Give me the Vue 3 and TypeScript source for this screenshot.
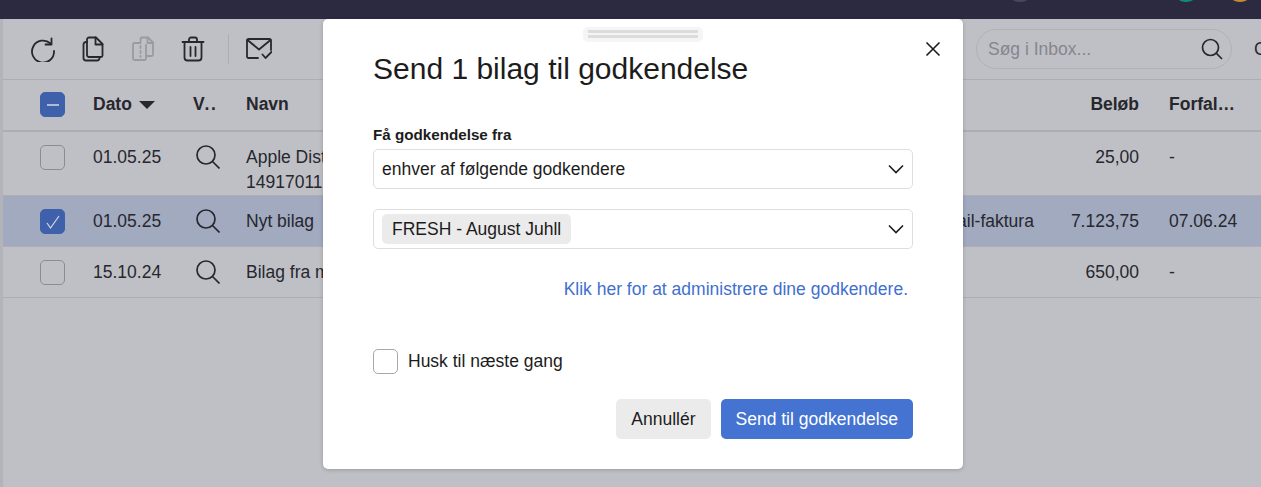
<script setup lang="ts">
type Row = {
  date: string;
  name: string[];
  kind: string;
  amount: string;
  due: string;
  selected: boolean;
};

const rows: Row[] = [
  { date: "01.05.25", name: ["Apple Distribution", "1491701199"], kind: "", amount: "25,00", due: "-", selected: false },
  { date: "01.05.25", name: ["Nyt bilag"], kind: "E-mail-faktura", amount: "7.123,75", due: "07.06.24", selected: true },
  { date: "15.10.24", name: ["Bilag fra mail"], kind: "", amount: "650,00", due: "-", selected: false },
];
</script>

<template>
  <div class="page">
    <header class="topbar">
      <span class="dot dot-grey"></span>
      <span class="dot dot-green"></span>
      <span class="dot dot-orange"></span>
    </header>

    <main class="panel">
      <div class="toolbar">
        <svg class="tool" width="24" height="26" viewBox="0 0 24 26" fill="none">
          <path d="M19.500 7.500A11 11 0 1 0 23 15" />
          <path d="M20.500 2.500v6h-6" />
        </svg>
        <svg class="tool" width="24" height="26" viewBox="0 0 24 26" fill="none">
          <path d="M8 1.500h7L21.500 8v11.500a1.500 1.500 0 0 1-1.500 1.500H8a2 2 0 0 1-2-2V3.500a2 2 0 0 1 2-2z" />
          <path d="M14.500 1.500V8.500h7" />
          <path d="M6 6H5A2.500 2.500 0 0 0 2.500 8.500V22A2.500 2.500 0 0 0 5 24.500h11A2.500 2.500 0 0 0 18.500 22v-1" />
        </svg>
        <svg class="tool tool-off" width="24" height="26" viewBox="0 0 24 26" fill="none">
          <path d="M11 1.500h6l5 5v12a1.500 1.500 0 0 1-1.500 1.500H15" />
          <path d="M16.500 1.500V7H22" />
          <path d="M9.500 7V3A1.500 1.500 0 0 1 11 1.500" />
          <path d="M9 7H3.500A1.500 1.500 0 0 0 2 8.500v14A1.500 1.500 0 0 0 3.500 24h10a1.500 1.500 0 0 0 1.500-1.500V9" />
          <path d="M9.500 10v2m0 3v2m0 3v1" />
        </svg>
        <svg class="tool" width="24" height="26" viewBox="0 0 24 26" fill="none">
          <path d="M1.500 6h21" />
          <path d="M8 6V3.500a2 2 0 0 1 2-2h4a2 2 0 0 1 2 2V6" />
          <path d="M3.500 6v15.500a3 3 0 0 0 3 3h11a3 3 0 0 0 3-3V6" />
          <path d="M9.500 11v9M14.500 11v9" />
        </svg>
        <span class="tool-sep"></span>
        <svg class="tool-mail" width="26" height="22" viewBox="0 0 26 22" fill="none">
          <path d="M12 20H2.500A1.500 1.500 0 0 1 1 18.500V2.500A1.500 1.500 0 0 1 2.500 1h21A1.500 1.500 0 0 1 25 2.500V12" />
          <path d="M1.500 2l11.500 9.500L24.500 2" />
          <path d="M16.500 16.500l3 3.500 6-6" />
        </svg>

        <label class="search">
          <span class="search-text">Søg i Inbox...</span>
          <svg width="22" height="22" viewBox="0 0 22 22" fill="none">
            <circle cx="9.500" cy="9.500" r="8" />
            <path d="M15.200 15.200l5.800 5.800" />
          </svg>
        </label>
        <span class="cut-off">C</span>
      </div>

      <div class="grid grid-head">
        <span class="check check-on">
          <svg width="14" height="14" viewBox="0 0 14 14"><path d="M1 7h12" stroke="#d5d9e6" stroke-width="1.500" /></svg>
        </span>
        <span class="sort">Dato <i class="caret"></i></span>
        <span class="short">V..</span>
        <span>Navn</span>
        <span></span>
        <span class="num">Beløb</span>
        <span class="due">Forfal…</span>
      </div>

      <div v-for="row in rows" :key="row.date + row.name[0]" class="grid grid-row" :class="{ selected: row.selected }">
        <span class="check" :class="{ 'check-on': row.selected }">
          <svg v-if="row.selected" width="16" height="16" viewBox="0 0 16 16" fill="none">
            <path d="M2 9l3.500 5L14 2" stroke="#d5d9e6" stroke-width="1.200" />
          </svg>
        </span>
        <span>{{ row.date }}</span>
        <svg class="lens" width="24" height="24" viewBox="0 0 24 24" fill="none">
          <circle cx="10" cy="10" r="9" />
          <path d="M16.500 16.500l7 7" />
        </svg>
        <span class="name">
          <span v-for="line in row.name" :key="line">{{ line }}</span>
        </span>
        <span>{{ row.kind }}</span>
        <span class="num">{{ row.amount }}</span>
        <span class="due">{{ row.due }}</span>
      </div>
    </main>

    <section class="modal">
      <div class="handle"><i></i><i></i></div>
      <button class="close" type="button" aria-label="Luk">
        <svg width="16" height="16" viewBox="0 0 16 16" fill="none">
          <path d="M1.500 1.500l13 13M14.500 1.500l-13 13" stroke="#1c1c1c" stroke-width="1.600" />
        </svg>
      </button>
      <h2>Send 1 bilag til godkendelse</h2>

      <p class="field-label">Få godkendelse fra</p>
      <div class="select">
        <span>enhver af følgende godkendere</span>
        <svg class="chev" width="16" height="10" viewBox="0 0 16 10" fill="none"><path d="M1 1.500l7 7 7-7" /></svg>
      </div>
      <div class="select select-tags">
        <span class="tag">FRESH - August Juhll</span>
        <svg class="chev" width="16" height="10" viewBox="0 0 16 10" fill="none"><path d="M1 1.500l7 7 7-7" /></svg>
      </div>

      <a class="manage" href="#">Klik her for at administrere dine godkendere.</a>

      <label class="remember">
        <span class="box"></span>
        <span>Husk til næste gang</span>
      </label>

      <footer class="actions">
        <button type="button" class="btn btn-plain">Annullér</button>
        <button type="button" class="btn btn-main">Send til godkendelse</button>
      </footer>
    </section>
  </div>
</template>

<style>
html,
body {
  margin: 0;
  background: #bfc0c5;
  overflow: hidden;
}
</style>

<style scoped>
.page {
  position: relative;
  width: 1261px;
  height: 487px;
  overflow: hidden;
  background: #bfc0c5;
  color: #27272e;
  font-family: "Liberation Sans", Arial, sans-serif;
  font-size: 17.500px;
}

.topbar {
  height: 19px;
  background: #2c2a41;
  display: flex;
  overflow: hidden;
}

.dot {
  width: 28px;
  height: 28px;
  border-radius: 50%;
  margin-top: -26px;
  flex: none;
}

.dot-grey {
  background: #4a4958;
  margin-left: 1006px;
}

.dot-green {
  background: #0f8f78;
  margin-left: 138px;
}

.dot-orange {
  background: #c98a2e;
  margin-left: 26px;
}

.panel {
  height: 468px;
  border-left: 3px solid #b3b4ba;
  box-sizing: border-box;
}

.toolbar {
  height: 61px;
  box-sizing: border-box;
  border-bottom: 1px solid #adaeb4;
  padding: 0 0 0 28px;
  display: flex;
  align-items: center;
}

.tool {
  margin-right: 26px;
  flex: none;
}

.tool path,
.tool-mail path {
  stroke: #27272e;
  stroke-width: 1.800;
  stroke-linecap: round;
  stroke-linejoin: round;
}

.tool-off path {
  stroke: #9a9ba1;
}

.tool-sep {
  width: 1px;
  height: 30px;
  background: #adaeb4;
  margin: 0 17px 0 -3px;
  flex: none;
}

.tool-mail {
  flex: none;
}

.search {
  margin-left: 704px;
  width: 256px;
  height: 40px;
  box-sizing: border-box;
  border: 1px solid #b1b2b9;
  border-radius: 20px;
  padding: 0 8px 0 11px;
  display: flex;
  align-items: center;
  justify-content: space-between;
  flex: none;
}

.search-text {
  color: #85868f;
}

.search circle,
.search path,
.lens circle,
.lens path {
  stroke: #27272e;
  stroke-width: 1.700;
}

.cut-off {
  margin-left: 22px;
}

.grid {
  display: grid;
  grid-template-columns: 53px 100px 53px 679px 114px 100px 119px;
  padding-left: 37px;
  box-sizing: border-box;
}

.grid-head {
  height: 52px;
  align-items: center;
  font-weight: 700;
  border-bottom: 2px solid #adaeb4;
  padding-bottom: 1px;
}

.grid-row {
  min-height: 51px;
  padding-top: 13px;
  border-bottom: 1px solid #adaeb4;
  line-height: 25px;
  align-items: start;
}

.selected {
  background: #a1aabf;
}

.check {
  width: 25px;
  height: 25px;
  box-sizing: border-box;
  border: 1px solid #8c8d93;
  border-radius: 5px;
  display: flex;
  align-items: center;
  justify-content: center;
}

.check-on {
  border-color: #3f61ac;
  background: #3f61ac;
}

.sort {
  display: flex;
  align-items: center;
  gap: 3px;
}

.caret {
  width: 0;
  height: 0;
  margin-left: 4px;
  border-left: 8px solid transparent;
  border-right: 8px solid transparent;
  border-top: 8px solid #27272e;
}

.short {
  letter-spacing: 1.500px;
}

.lens {
  margin-left: 3px;
}

.name {
  display: flex;
  flex-direction: column;
  white-space: nowrap;
}

.num {
  text-align: right;
}

.due {
  padding-left: 30px;
  white-space: nowrap;
}

.modal {
  position: absolute;
  left: 323px;
  top: 19px;
  width: 640px;
  height: 450px;
  box-sizing: border-box;
  padding: 8px 50px 0;
  background: #fff;
  border-radius: 5px;
  box-shadow: 0 1px 4px rgba(0, 0, 0, 0.2);
  color: #1c1c1c;
}

.handle {
  width: 120px;
  height: 15px;
  margin: 0 auto;
  box-sizing: border-box;
  padding: 3px 5px;
  background: #f5f5f5;
  border-radius: 5px;
  display: flex;
  flex-direction: column;
  gap: 2px;
}

.handle i {
  height: 3px;
  background: #dcdcdc;
}

.close {
  position: absolute;
  top: 22px;
  right: 22px;
  padding: 0;
  border: 0;
  background: none;
  line-height: 0;
}

h2 {
  margin: 10px 0 0;
  font-size: 30px;
  font-weight: 400;
  line-height: 34px;
}

.field-label {
  margin: 40px 0 0;
  font-size: 15.200px;
  font-weight: 700;
  line-height: 18px;
}

.select {
  height: 40px;
  box-sizing: border-box;
  margin-top: 5px;
  padding: 0 8px;
  border: 1px solid #dedede;
  border-radius: 5px;
  display: flex;
  align-items: center;
  justify-content: space-between;
}

.select-tags {
  margin-top: 20px;
}

.chev path {
  stroke: #1c1c1c;
  stroke-width: 1.600;
}

.tag {
  height: 30px;
  padding: 0 10px;
  background: #ebebeb;
  border-radius: 5px;
  display: flex;
  align-items: center;
}

.manage {
  display: block;
  margin: 30px 5px 0 0;
  text-align: right;
  color: #3f6fd1;
  text-decoration: none;
  line-height: 20px;
}

.remember {
  margin-top: 50px;
  display: flex;
  align-items: center;
  gap: 10px;
}

.box {
  width: 25px;
  height: 25px;
  box-sizing: border-box;
  border: 1px solid #a8a8a8;
  border-radius: 5px;
}

.actions {
  margin-top: 25px;
  display: flex;
  justify-content: flex-end;
  gap: 10px;
}

.btn {
  height: 40px;
  border: 0;
  border-radius: 5px;
  padding: 0 15px;
  font: inherit;
}

.btn-plain {
  background: #ebebeb;
  color: #1c1c1c;
}

.btn-main {
  background: #4473d2;
  color: #fff;
}
</style>
